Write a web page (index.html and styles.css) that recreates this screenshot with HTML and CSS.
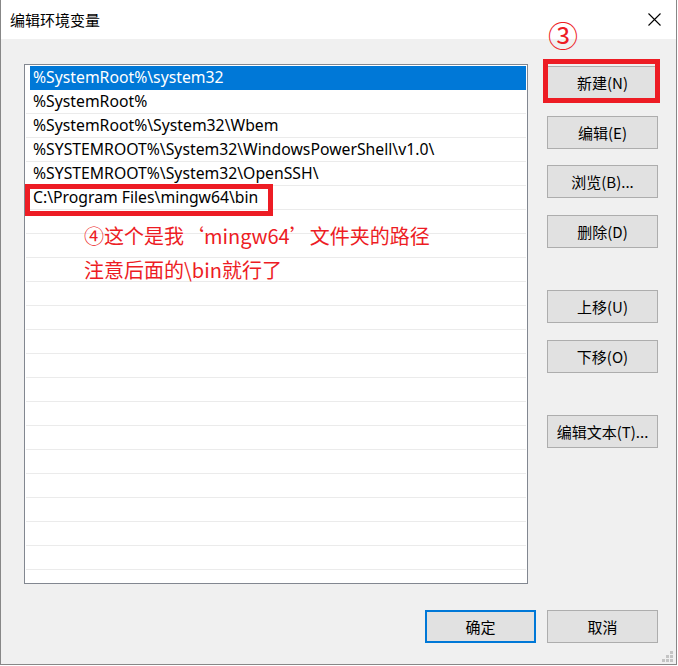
FILE: index.html
```html
<!DOCTYPE html>
<html lang="zh-CN">
<head>
<meta charset="utf-8">
<title>编辑环境变量</title>
<link rel="stylesheet" href="styles.css">
</head>
<body>
<div class="window">
  <div class="titlebar">
    <span class="title">编辑环境变量</span>
    <svg class="close" width="13" height="13" viewBox="0 0 13 13"><path d="M0.5 0.5 L12.5 12.5 M12.5 0.5 L0.5 12.5" stroke="#000" stroke-width="1.1" fill="none"/></svg>
  </div>
  <div class="content">
    <div class="main">
      <div class="listbox">
        <div class="row sel">%SystemRoot%\system32</div>
        <div class="row">%SystemRoot%</div>
        <div class="row">%SystemRoot%\System32\Wbem</div>
        <div class="row">%SYSTEMROOT%\System32\WindowsPowerShell\v1.0\</div>
        <div class="row">%SYSTEMROOT%\System32\OpenSSH\</div>
        <div class="row">C:\Program Files\mingw64\bin</div>
        <div class="row"></div>
        <div class="row"></div>
        <div class="row"></div>
        <div class="row"></div>
        <div class="row"></div>
        <div class="row"></div>
        <div class="row"></div>
        <div class="row"></div>
        <div class="row"></div>
        <div class="row"></div>
        <div class="row"></div>
        <div class="row"></div>
        <div class="row"></div>
        <div class="row"></div>
        <div class="row"></div>
        <div class="row"></div>
      </div>
      <div class="buttons">
        <div class="group">
          <button class="btn">新建(N)</button>
          <button class="btn">编辑(E)</button>
          <button class="btn">浏览(B)...</button>
          <button class="btn">删除(D)</button>
        </div>
        <div class="group">
          <button class="btn">上移(U)</button>
          <button class="btn">下移(O)</button>
        </div>
        <div class="group">
          <button class="btn">编辑文本(T)...</button>
        </div>
      </div>
    </div>
    <div class="footer">
      <button class="btn default">确定</button>
      <button class="btn">取消</button>
    </div>
  </div>
  <div class="mark mark-new"></div>
  <div class="mark mark-path"></div>
  <div class="num3">③</div>
  <div class="note">
    <p>④这个是我‘mingw64’文件夹的路径</p>
    <p>注意后面的\bin就行了</p>
  </div>
  <svg class="grip" width="12" height="12" viewBox="0 0 12 12">
    <rect x="8" y="0" width="3" height="3"/>
    <rect x="4" y="4" width="3" height="3"/>
    <rect x="8" y="4" width="3" height="3"/>
    <rect x="0" y="8" width="3" height="3"/>
    <rect x="4" y="8" width="3" height="3"/>
    <rect x="8" y="8" width="3" height="3"/>
  </svg>
</div>
</body>
</html>
```

FILE: styles.css
```css
html, body {
  margin: 0;
  padding: 0;
  background: #ffffff;
}
body {
  width: 678px;
  height: 666px;
  overflow: hidden;
}
.window {
  position: relative;
  width: 677px;
  height: 665px;
  box-sizing: border-box;
  border: 1px solid #878787;
  border-top: none;
  background: #f0f0f0;
  display: flex;
  flex-direction: column;
  font-family: "Noto Sans", "Noto Sans CJK SC", sans-serif;
}
.titlebar {
  flex: none;
  height: 39px;
  background: #ffffff;
  display: flex;
  align-items: center;
  padding-left: 9px;
}
.title {
  font-family: "Noto Sans CJK SC", sans-serif;
  font-size: 15px;
  color: #000;
}
.close {
  margin-left: auto;
  margin-right: 15px;
}
.content {
  flex: 1;
  display: flex;
  flex-direction: column;
  padding: 25px 18px 21px 23px;
}
.main {
  display: flex;
  gap: 19px;
}
.listbox {
  width: 504px;
  height: 520px;
  box-sizing: border-box;
  border: 1px solid #828790;
  background: #ffffff;
  padding: 1px 1px 0 1px;
  overflow: hidden;
}
.row {
  height: 24px;
  box-sizing: border-box;
  border-bottom: 1px solid #ebebeb;
  padding-left: 7px;
  font-size: 15.75px;
  line-height: 23px;
  color: #000;
  white-space: nowrap;
}
.row.sel {
  margin-left: 4px;
  padding-left: 3px;
  background: #0078d7;
  border-bottom-color: #0078d7;
  color: #ffffff;
}
.buttons {
  margin-top: 2px;
  display: flex;
  flex-direction: column;
}
.group {
  display: flex;
  flex-direction: column;
  gap: 16.6px;
}
.group + .group {
  margin-top: 42.2px;
}
.btn {
  width: 111px;
  height: 33px;
  box-sizing: border-box;
  padding: 0;
  background: #e1e1e1;
  border: 1px solid #adadad;
  color: #000;
  font-family: "Noto Sans CJK SC", sans-serif;
  font-size: 15px;
}
.btn.default {
  border: 2px solid #0078d7;
}
.footer {
  margin-top: 26px;
  display: flex;
  justify-content: flex-end;
  gap: 11px;
}
.mark {
  position: absolute;
  box-sizing: border-box;
  border: 5px solid #ed1c24;
}
.mark-new {
  left: 542px;
  top: 59px;
  width: 117px;
  height: 44px;
}
.mark-path {
  left: 24px;
  top: 184px;
  width: 248px;
  height: 32px;
}
.num3 {
  position: absolute;
  left: 547px;
  top: 18px;
  font-family: "Noto Sans CJK SC", sans-serif;
  font-size: 30px;
  line-height: 32px;
  color: #ed1c24;
}
.note {
  position: absolute;
  left: 83px;
  top: 219px;
  font-family: "Noto Sans CJK SC", sans-serif;
  font-size: 20px;
  line-height: 34px;
  color: #ed1c24;
}
.note p {
  margin: 0;
  white-space: nowrap;
}
.grip {
  position: absolute;
  right: 2px;
  bottom: 1px;
  fill: #c4c4c4;
}
```
